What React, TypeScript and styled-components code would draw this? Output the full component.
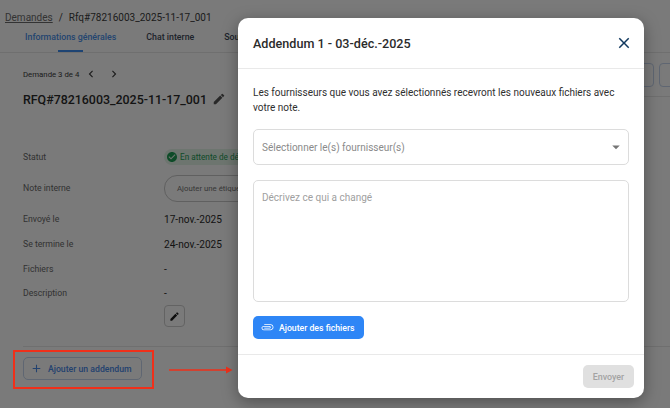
import { Fragment } from 'react'
import { createGlobalStyle, styled } from 'styled-components'
import {
  MdAdd,
  MdArrowDropDown,
  MdAttachFile,
  MdCheckCircle,
  MdChevronLeft,
  MdChevronRight,
  MdClose,
  MdEdit,
} from 'react-icons/md'

const GlobalStyle = createGlobalStyle`
  html, body {
    margin: 0;
    padding: 0;
    background: #fff;
    font-family: Roboto, "Liberation Sans", sans-serif;
  }
`

const Screen = styled.div`
  position: relative;
  width: 670px;
  height: 408px;
  overflow: hidden;
  background: #fff;
`

const Page = styled.div`
  display: flex;
  flex-direction: column;
  height: 100%;
`

const Breadcrumb = styled.div`
  display: flex;
  align-items: center;
  gap: 6px;
  height: 18px;
  padding: 8px 0 0 5px;
  font-size: 10px;
  color: #3c3c3c;
`

const CrumbLink = styled.span`
  color: #6b6b6b;
  text-decoration: underline;
`

const Tabs = styled.div`
  display: flex;
  gap: 30px;
  height: 26px;
  padding-left: 25px;
  border-bottom: 1px solid #e8e8e8;
`

const Tab = styled.div<{ $active?: boolean }>`
  position: relative;
  padding-top: 6px;
  font-size: 8.8px;
  font-weight: 500;
  white-space: nowrap;
  color: ${(p) => (p.$active ? '#4a90ea' : '#3f4a5a')};

  ${(p) =>
    p.$active &&
    `&::after {
      content: '';
      position: absolute;
      left: 33px;
      bottom: 0;
      width: 25px;
      height: 2px;
      background: #3f8ef0;
    }`}
`

const Content = styled.div`
  display: flex;
  flex-direction: column;
  padding: 0 0 0 23px;
`

const Pager = styled.div`
  display: flex;
  align-items: center;
  gap: 9px;
  height: 14px;
  margin-top: 14px;
  font-size: 7.8px;
  color: #3c3c3c;
  white-space: nowrap;

  svg:first-of-type {
    margin-left: -4px;
  }
`

const TitleRow = styled.div`
  display: flex;
  align-items: center;
  gap: 5px;
  height: 20px;
  margin-top: 8px;
  font-size: 12.4px;
  font-weight: 500;
  color: #2b2b2b;
  white-space: nowrap;
`

const Toolbar = styled.div`
  position: absolute;
  top: 63px;
  left: 640px;
  display: flex;
  gap: 5px;
`

const GhostButton = styled.div`
  width: 12px;
  height: 22px;
  border: 1px solid #c6d6ee;
  border-radius: 4px;
  background: #fff;

  &:last-child {
    width: 24px;
  }
`

const Divider = styled.div`
  position: absolute;
  top: 96px;
  left: 644px;
  width: 26px;
  height: 1px;
  background: #e8e8e8;
`

const Fields = styled.div`
  display: grid;
  grid-template-columns: 141px 1fr;
  align-items: center;
  margin-top: 36px;
  margin-right: 32px;
`

const Label = styled.div<{ $h: number }>`
  display: flex;
  align-items: center;
  height: ${(p) => p.$h}px;
  font-size: 8.7px;
  color: #6a6a6a;
`

const Value = styled.div<{ $h: number }>`
  display: flex;
  align-items: center;
  height: ${(p) => p.$h}px;
  font-size: 10.1px;
  color: #2b2b2b;
  white-space: nowrap;
`

const StatusChip = styled.div`
  display: inline-flex;
  align-items: center;
  gap: 2px;
  height: 16px;
  padding: 0 8px 0 2px;
  border-radius: 8px;
  background: #e3f4e9;
  font-size: 8.2px;
  color: #1f9d55;
`

const TagInput = styled.div`
  display: flex;
  align-items: center;
  width: 120px;
  height: 25px;
  padding-left: 12px;
  border: 1px solid #c8c8c8;
  border-radius: 13px;
  font-size: 7.8px;
  color: #757575;
`

const IconButton = styled.div`
  display: flex;
  align-items: center;
  justify-content: center;
  width: 19px;
  height: 20px;
  border: 1px solid #d0d0d0;
  border-radius: 4px;
  color: #1d1d1d;
`

const BottomBar = styled.div`
  margin-top: 19px;
  padding-top: 10px;
  border-top: 1px solid #e8e8e8;
`

const AddendumButton = styled.div`
  display: inline-flex;
  align-items: center;
  gap: 5px;
  width: 119px;
  height: 23px;
  padding-left: 6px;
  box-sizing: border-box;
  border: 1px solid #c6d6ee;
  border-radius: 5px;
  font-size: 8.7px;
  font-weight: 500;
  color: #4a8ae8;
  white-space: nowrap;
`

const Overlay = styled.div`
  position: absolute;
  inset: 0;
  background: rgba(0, 0, 0, 0.52);
`

const Modal = styled.div`
  position: absolute;
  left: 238px;
  top: 18px;
  display: flex;
  flex-direction: column;
  width: 406px;
  height: 380px;
  border-radius: 10px;
  background: #fff;
  box-shadow: 0 4px 16px rgba(0, 0, 0, 0.35);
`

const ModalHeader = styled.div`
  display: flex;
  align-items: center;
  justify-content: space-between;
  height: 50px;
  padding: 0 11px 0 15px;
  border-bottom: 1px solid #e9e9e9;
`

const ModalTitle = styled.div`
  font-size: 12.6px;
  font-weight: 500;
  color: #2b2b2b;
`

const CloseIcon = styled(MdClose)`
  color: #12395f;
`

const ModalBody = styled.div`
  flex: 1;
  display: flex;
  flex-direction: column;
  align-items: flex-start;
  padding: 15px 15px 0;
`

const Intro = styled.div`
  padding-top: 1px;
  font-size: 10px;
  line-height: 15px;
  color: #2f2f2f;
`

const SelectBox = styled.div`
  display: flex;
  align-items: center;
  justify-content: space-between;
  box-sizing: border-box;
  width: 376px;
  height: 36px;
  margin-top: 14px;
  padding: 0 3px 0 8px;
  border: 1px solid #dcdcdc;
  border-radius: 5px;
  font-size: 10px;
  color: #8a8a8a;

  svg {
    color: #757575;
  }
`

const NoteBox = styled.div`
  box-sizing: border-box;
  width: 376px;
  height: 122px;
  margin-top: 15px;
  padding: 11px 8px;
  border: 1px solid #dcdcdc;
  border-radius: 5px;
  font-size: 10px;
  color: #a0a0a0;
`

const FilesButton = styled.div`
  display: flex;
  align-items: center;
  gap: 5px;
  box-sizing: border-box;
  width: 111px;
  height: 23px;
  margin-top: 14px;
  padding-left: 8px;
  border-radius: 5px;
  background: #2e86f6;
  font-size: 8.7px;
  font-weight: 500;
  color: #fff;

  svg {
    transform: rotate(-90deg);
  }
`

const ModalFooter = styled.div`
  display: flex;
  justify-content: flex-end;
  box-sizing: border-box;
  height: 44px;
  padding: 10px 10px 0 0;
  border-top: 1px solid #e9e9e9;
`

const SendButton = styled.div`
  display: flex;
  align-items: center;
  justify-content: center;
  width: 51px;
  height: 23px;
  border-radius: 5px;
  background: #e0e0e0;
  font-size: 8.9px;
  font-weight: 500;
  color: #a3a3a3;
`

const RedBox = styled.div`
  position: absolute;
  left: 13px;
  top: 350px;
  width: 137px;
  height: 35px;
  border: 2px solid #f0301a;
`

const RedArrow = styled.svg`
  position: absolute;
  left: 169px;
  top: 365px;
`

const fields = [
  { label: 'Statut', h: 24 },
  { label: 'Note interne', h: 38 },
  { label: 'Envoyé le', h: 24, value: '17-nov.-2025' },
  { label: 'Se termine le', h: 26, value: '24-nov.-2025' },
  { label: 'Fichiers', h: 24, value: '-' },
]

export default function App() {
  return (
    <Screen>
      <GlobalStyle />
      <Page>
        <Breadcrumb>
          <CrumbLink>Demandes</CrumbLink>
          <span>/</span>
          <span>Rfq#78216003_2025-11-17_001</span>
        </Breadcrumb>
        <Tabs>
          <Tab $active>Informations générales</Tab>
          <Tab>Chat interne</Tab>
          <Tab>Soumissions</Tab>
        </Tabs>
        <Content>
          <Pager>
            Demande 3 de 4
            <MdChevronLeft size={14} />
            <MdChevronRight size={14} />
          </Pager>
          <TitleRow>
            RFQ#78216003_2025-11-17_001
            <MdEdit size={14} color="#555" />
          </TitleRow>
          <Fields>
            {fields.map((f) => (
              <Fragment key={f.label}>
                <Label $h={f.h}>{f.label}</Label>
                <Value $h={f.h}>
                  {f.label === 'Statut' && (
                    <StatusChip>
                      <MdCheckCircle size={12} />
                      En attente de décision
                    </StatusChip>
                  )}
                  {f.label === 'Note interne' && <TagInput>Ajouter une étiquette</TagInput>}
                  {f.value}
                </Value>
              </Fragment>
            ))}
            <Label $h={24}>Description</Label>
            <Value $h={24}>-</Value>
            <span />
            <IconButton>
              <MdEdit size={11} />
            </IconButton>
          </Fields>
          <BottomBar>
            <AddendumButton>
              <MdAdd size={13} />
              Ajouter un addendum
            </AddendumButton>
          </BottomBar>
        </Content>
      </Page>
      <Toolbar>
        <GhostButton />
        <GhostButton />
      </Toolbar>
      <Divider />
      <Overlay />
      <RedBox />
      <RedArrow width="64" height="10" viewBox="0 0 64 10">
        <path d="M0 5h57" stroke="#f0301a" strokeWidth="1.5" />
        <path d="M57 1.5L63.5 5L57 8.5z" fill="#f0301a" />
      </RedArrow>
      <Modal>
        <ModalHeader>
          <ModalTitle>Addendum 1 - 03-déc.-2025</ModalTitle>
          <CloseIcon size={18} />
        </ModalHeader>
        <ModalBody>
          <Intro>
            Les fournisseurs que vous avez sélectionnés recevront les nouveaux fichiers avec votre note.
          </Intro>
          <SelectBox>
            Sélectionner le(s) fournisseur(s)
            <MdArrowDropDown size={18} />
          </SelectBox>
          <NoteBox>Décrivez ce qui a changé</NoteBox>
          <FilesButton>
            <MdAttachFile size={13} />
            Ajouter des fichiers
          </FilesButton>
        </ModalBody>
        <ModalFooter>
          <SendButton>Envoyer</SendButton>
        </ModalFooter>
      </Modal>
    </Screen>
  )
}
